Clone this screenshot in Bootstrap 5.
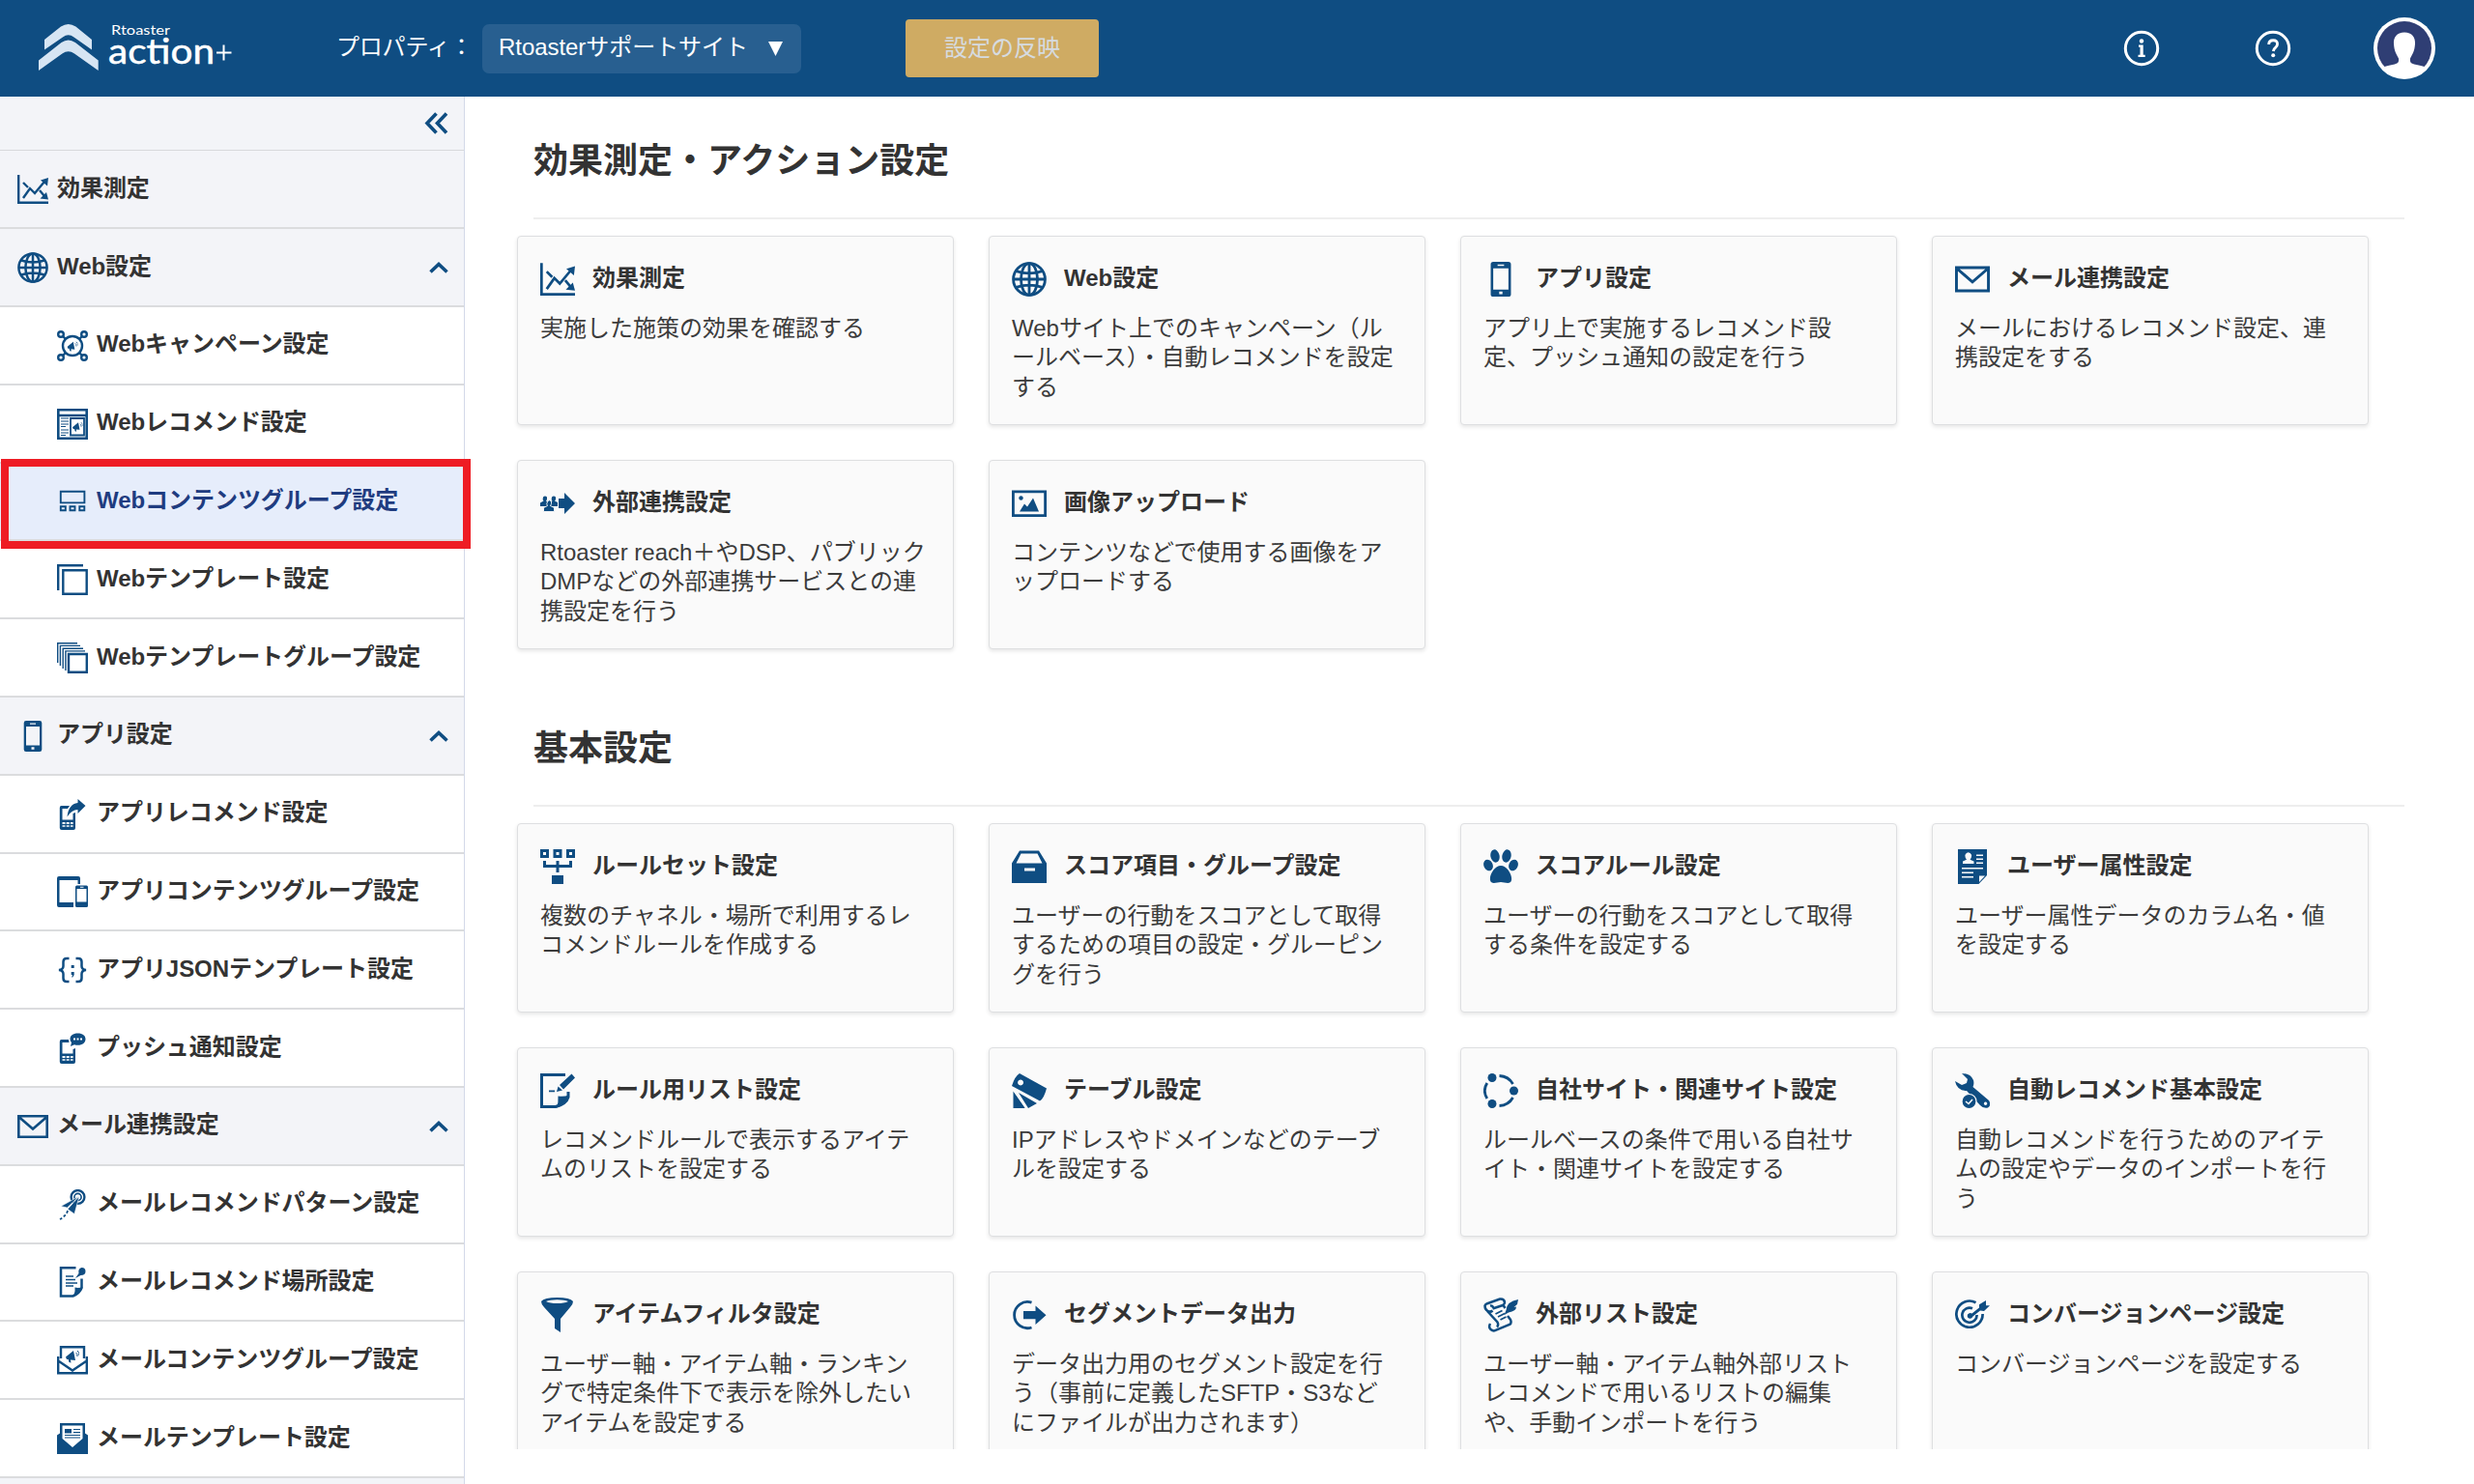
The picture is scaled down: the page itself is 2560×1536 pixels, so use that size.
<!DOCTYPE html>
<html lang="ja">
<head>
<meta charset="utf-8">
<meta name="viewport" content="width=device-width, initial-scale=1">
<title>Rtoaster action+</title>
<link rel="stylesheet" href="https://cdn.jsdelivr.net/npm/bootstrap@5.3.0/dist/css/bootstrap.min.css">
<style>
:root{--navy:#0f4d82;--pane:#f3f4f8;--ink:#333}
html,body{height:100%;overflow:hidden}
body{font-family:"Liberation Sans","Noto Sans CJK JP",sans-serif;font-size:24px;line-height:1.25;color:var(--ink);background:#fff}
svg{display:block;flex:none;fill:currentColor}
.topbar{height:100px;background:var(--navy);color:#fff;padding-left:40px;padding-right:40px}
.logo{width:202px;height:76px;margin-right:106px}
.prop-label{width:151px;letter-spacing:-.2px;margin-top:-2px}
.prop-select{width:330px;height:51px;border-radius:7px;background:#285f90;color:#fff;padding:0 18px 0 16px;font-size:24px}
.prop-select span{margin-top:-2px;letter-spacing:-.05px}
.apply-btn{width:200px;height:60px;margin-left:108px;border-radius:4px;background:#cfab63;color:#d6dbe0;border:0;font-size:24px;padding:0}
.round-links{gap:98px}
.avatar{margin-left:-13px}
.side{width:481px;border-right:1px solid #d3d9e8;background:#fff}
.side-fold{height:56.400px;background:var(--pane);border-bottom:1px solid #d8d9dc;padding-right:16px;color:var(--navy)}
.side-item{height:80.800px;border-bottom:2px solid #dbdcde;padding:0 16px 0 59px;font-weight:700;position:relative;gap:9px;white-space:nowrap}
.side-item.group{background:var(--pane);padding-left:18px}
.side-item svg{color:var(--navy);width:32px;height:32px;margin-top:1px}
.side-item svg.caret{width:20px;height:12px;margin-top:1px}
.side-item span{margin-top:-2px;letter-spacing:-.05px}
.side-item.current{background:#e6edfb;color:#1f3c80}
.hilite{position:absolute;left:1px;top:-5px;width:486px;height:93px;border:8px solid #ee1c24;z-index:5}
.pane{height:1400px;overflow:hidden;padding:0 72px 0 54px}
.sec-title{font-size:36px;font-weight:700;line-height:44px;padding:45px 0 36px;margin:0 0 0 17px;border-bottom:2px solid #eee}
.tiles + .sec-title{margin-top:36px}
.tiles{display:grid;grid-template-columns:repeat(4,451.500px);grid-auto-rows:196px;gap:36px 36.500px;padding-top:17px}
.tile{border:1px solid #dedfe1;border-radius:4px;background:#fafafa;box-shadow:0 2px 4px rgba(0,0,0,.1);padding:26px 0 0 23px;white-space:nowrap}
.tile-head{height:36px;gap:18px;font-weight:700}
.tile-head svg{width:36px;height:36px;color:var(--navy)}
.tile-head span{margin-top:-3px}
.tile p{margin:17.500px 0 0;line-height:30.600px;color:#3c3c3c}
</style>
</head>
<body class="d-flex flex-column">

<svg width="0" height="0" class="position-absolute">
<defs>
<symbol id="chart" viewBox="0 0 32 32"><path d="M0 1h2.400v27.600H32V31H0z"/><path d="M6 25l7-10 5 5 10-12M6 9l5 5M23 17l5 6" fill="none" stroke="currentColor" stroke-width="2.400"/><path d="M32 4l-1 8.500-7-6zM32 26.500l-8.500-1 6.500-6.500z"/></symbol>
<symbol id="globe" viewBox="0 0 32 32"><g fill="none" stroke="currentColor" stroke-width="2.500"><circle cx="16" cy="16" r="14.600"/><ellipse cx="16" cy="16" rx="7.600" ry="14.600"/><path d="M16 1v30M1 16h30M4 8.500q12 4 24 0M4 23.500q12-4 24 0"/></g></symbol>
<symbol id="phone" viewBox="0 0 32 32"><path fill-rule="evenodd" d="M9 0h14q2.300 0 2.300 2.300v27.400q0 2.300-2.300 2.300H9q-2.300 0-2.300-2.300V2.300Q6.700 0 9 0zM9 6v19.500h14V6zM13 2.500v1.300h6V2.500zM14.500 27.300v2.400h3v-2.400z"/></symbol>
<symbol id="mail" viewBox="0 0 32 32"><path d="M1.300 5.300h29.400v21.400H1.300zM1.500 6L16 18.500 30.500 6" fill="none" stroke="currentColor" stroke-width="2.600"/></symbol>
<symbol id="horn" viewBox="0 0 14 14"><path d="M0 7.500L8 1l2 10-5-.500.500 3-2-.500-.800-3L1 10z"/><path d="M10.500 3q2 1 1.500 4M12 1q2.500 2 2 5" fill="none" stroke="currentColor"/></symbol>
<symbol id="campaign" viewBox="0 0 32 32"><g fill="none" stroke="currentColor" stroke-width="2.400"><circle cx="16" cy="16" r="10"/><circle cx="4" cy="4" r="2.800"/><circle cx="28" cy="4" r="2.800"/><circle cx="4" cy="28" r="2.800"/><circle cx="28" cy="28" r="2.800"/><path d="M6 6l3 3M26 6l-3 3M6 26l3-3M26 26l-3-3"/></g><use href="#horn" x="10.500" y="11" width="11" height="11"/></symbol>
<symbol id="webreco" viewBox="0 0 32 32"><path d="M1.300 1.300h29.400v29.400H1.300zM1 7h30" fill="none" stroke="currentColor" stroke-width="2.600"/><path d="M14 10h14v17.500H14z" fill="none" stroke="currentColor" stroke-width="1.800"/><path d="M4 10h8M4 13h8M4 16h8M4 18.500h5M4 22h8M4 25h8M4 27.500h5" stroke="currentColor" stroke-width="1.200"/><use href="#horn" x="16" y="13.500" width="10.500" height="10.500"/></symbol>
<symbol id="group" viewBox="0 0 32 32"><path d="M3.800 5.700h24.600v11.700H3.800zM3.800 21.300h5v4h-5zM13.500 21.300h5v4h-5zM23.300 21.300h5v4h-5z" fill="none" stroke="currentColor" stroke-width="1.900"/></symbol>
<symbol id="copy" viewBox="0 0 32 32"><path d="M6.300 6.300h24.400v24.400H6.300zM1.200 27V1.200H27" fill="none" stroke="currentColor" stroke-width="2.400"/></symbol>
<symbol id="copies" viewBox="0 0 32 32"><path d="M12 12h18.800v18.800H12z" fill="none" stroke="currentColor" stroke-width="2.400"/><path d="M.700 21V.700H21M3.400 24V3.400H24M6.200 27V6.200H27M8.900 29V8.900H29" fill="none" stroke="currentColor" stroke-width="1.400"/></symbol>
<symbol id="mobile-share" viewBox="0 0 32 32"><path fill-rule="evenodd" d="M4.500 7H13l-2 3H5.500v11.500h11V15l2.500-1v16q0 2-2 2H4.800q-2 0-2-2V9q0-2 1.700-2zM5.500 24v2h3v-2zM9.700 24v2h3v-2zM13.900 24v2h2.700v-2zM5.500 27.200v1.500h3v-1.500zM9.700 27.200v1.500h3v-1.500zM13.900 27.200v1.500h2.700v-1.500z"/><path d="M29.500 7L21.500 0v4Q12 5 10.500 18.500 15 11 21.500 11v4z"/></symbol>
<symbol id="tablet" viewBox="0 0 32 32"><path d="M2 0h20q2 0 2 2v6h-2.500V4H2.500v23H17v5H2q-2 0-2-2V2Q0 0 2 0z"/><path fill-rule="evenodd" d="M20.500 9.500h10q1.500 0 1.500 1.500v19.500q0 1.500-1.500 1.500h-10q-1.500 0-1.500-1.500V11q0-1.500 1.500-1.500zM20.500 13v13.500h10V13zM24 10.700v1h3.500v-1z"/></symbol>
<symbol id="braces" viewBox="0 0 32 32"><path d="M12.500 4H10q-3.500 0-3.500 3.500V12q0 3.500-4.500 4 4.500.500 4.500 4v4.500Q6.500 28 10 28h2.500M19.500 4H22q3.500 0 3.500 3.500V12q0 3.500 4.500 4-4.500.500-4.500 4v4.500Q25.500 28 22 28h-2.500" fill="none" stroke="currentColor" stroke-width="2.500"/><path d="M14.700 11h3v3h-3zM14.700 18h3v3l-1.500 2.500h-1L16 21h-1.300z"/></symbol>
<symbol id="mobile-chat" viewBox="0 0 32 32"><path fill-rule="evenodd" d="M4.500 7H12l.500 3h-7v11.500h11V17l2.500-1v14q0 2-2 2H4.800q-2 0-2-2V9q0-2 1.700-2zM5.500 24v2h3v-2zM9.700 24v2h3v-2zM13.900 24v2h2.700v-2zM5.500 27.200v1.500h3v-1.500zM9.700 27.200v1.500h3v-1.500zM13.900 27.200v1.500h2.700v-1.500z"/><path fill-rule="evenodd" d="M21.500.500c5 0 8 2.500 8 6s-3 6.300-8 6.300q-2 0-3.500-.500l-4 1.700 1-4Q13.500 8.500 13.500 6.500c0-3.500 3-6 8-6zM17 5.500v2h2v-2zM20.500 5.500v2h2v-2zM24 5.500v2h2v-2z"/></symbol>
<symbol id="plane" viewBox="0 0 32 32"><g fill="none" stroke="currentColor"><circle cx="21.500" cy="8" r="6.900" stroke-width="2.400"/><circle cx="21.500" cy="8" r="3.600" stroke-width="1.600"/><path d="M11 22q-1 5-8 9" stroke-width="1.800" stroke-dasharray="3 2"/></g><path d="M23 7L4 17.500l6.500 1.500zM23 7L11 20.500l7 5z" stroke="#fff" stroke-width=".600"/></symbol>
<symbol id="notepin" viewBox="0 0 32 32"><path d="M19.500 1.300H4V30.500h12.500q7-3 9-8.500V12.500" fill="none" stroke="currentColor" stroke-width="2.500"/><path d="M16 31q3-3 2.500-9.500 4 1 8-.500-2 6-10.500 10zM19 12l3.500-5q-1-5 3-6 4 0 4 4t-5 4z"/><path d="M9 10h8M9 13.500h10M9 17h12M9 20h8" stroke="currentColor" stroke-width="1.500"/></symbol>
<symbol id="mailhorn" viewBox="0 0 32 32"><path d="M4 14V2.300h24V14" fill="none" stroke="currentColor" stroke-width="2.400"/><path d="M1.200 12v17.300h29.600V12M2 17l14 9.500L30 17" fill="none" stroke="currentColor" stroke-width="2.400"/><use href="#horn" x="9" y="5" width="14" height="14"/></symbol>
<symbol id="mailnews" viewBox="0 0 32 32"><path fill-rule="evenodd" d="M3 0h26v10.500l3 2V32H0V12.500l3-2zM5.500 2.500V16L16 25l10.500-9V2.500z"/><path d="M8 6h7v4.500H8zM17 6h7v1h-7zM17 9h7v1.200h-7zM8 12h16v1H8zM8 14.500h16v1H8z"/></symbol>
<symbol id="people" viewBox="0 0 36 36"><path d="M19 13h6V7l11 11-11 11v-6h-6z"/><path d="M3 11.500q2-2 4 0 .500 3-1 4l2 1.500v4H0v-3.500l3.500-2q-1.500-1-.500-4zM12 11.500q2-2 4 0 .500 3-1 4l3 1.500v4h-7v-4.500l1.500-1q-1.500-1-.500-4z"/><path d="M7.500 16q2-2.500 4 0 .500 3-1 4.500l4 2v4h-11v-4l4-2q-1.500-1.500 0-4.500z" stroke="#fafafa" stroke-width=".900"/></symbol>
<symbol id="image" viewBox="0 0 36 36"><path d="M1.400 5.900h33.200v24.700H1.400z" fill="none" stroke="currentColor" stroke-width="2.800"/><path d="M8 26.500l5-8 3 3 6-9 6 14z"/><circle cx="9.500" cy="12.500" r="2.200"/></symbol>
<symbol id="ruleset" viewBox="0 0 36 36"><path d="M1.500 1.500h6v6h-6zM15 1.500h6v6h-6zM28.500 1.500h6v6h-6zM4.500 12v5.500h27V12M18 12v12" fill="none" stroke="currentColor" stroke-width="3"/><path d="M12 27h12v9H12z"/></symbol>
<symbol id="drawer" viewBox="0 0 36 36"><path fill-rule="evenodd" d="M8 1.500h20l8 13V35H0V14.500zM9.500 4.500l-5 10h27l-5-10zM13 19.500v3h11v-3z"/></symbol>
<symbol id="paw" viewBox="0 0 36 36"><path d="M18 17c6 0 12 9 11 15-1 5-7 2-11 2s-10 3-11-2c-1-6 5-15 11-15z"/><ellipse cx="12" cy="7" rx="4.600" ry="6.700" transform="rotate(-12 12 7)"/><ellipse cx="24" cy="7" rx="4.600" ry="6.700" transform="rotate(12 24 7)"/><ellipse cx="5" cy="16.500" rx="4.600" ry="6" transform="rotate(-25 5 16.500)"/><ellipse cx="31" cy="16.500" rx="4.600" ry="6" transform="rotate(25 31 16.500)"/></symbol>
<symbol id="profile" viewBox="0 0 36 36"><path d="M3 0h30v27l-8.500 9H3z"/><g fill="#fafafa"><path d="M8 15v-2.500l4-1.800q-2-2-1.500-5 1-2.500 3.200-2.500T17 5.700q.500 3-1.500 5l4 1.800V15zM22 5.500h7V7h-7zM22 9.500h7V11h-7zM22 13.500h7V15h-7zM7 19h22v1.500H7zM7 23.500h12V25H7zM7 28h12v1.500H7zM25 34v-6.500h6z"/></g></symbol>
<symbol id="editnote" viewBox="0 0 36 36"><path d="M26 1.500H1.500v33H16q11-3 13-10V19" fill="none" stroke="currentColor" stroke-width="3"/><path d="M17 35.500q2-5 1.500-12 6 1 11-1-2 10-12.500 13zM20 12L32.500.500l3.500 4L24 16.500zM18.500 13.500l4.500 4-6 1.500zM9 17.500h6v1.800H9z"/></symbol>
<symbol id="swatch" viewBox="0 0 36 36"><path fill-rule="evenodd" d="M8 0l28 15.500q-3 11-7 13L0 13Q3 3 8 0zM9 6.500a3 3 0 1 0 .100 0z"/><path d="M7 20l19 11-9 5zM1.500 18.500L14 36H1.500z"/><path d="M2 17l13 19" stroke="#fafafa" stroke-width="2"/></symbol>
<symbol id="orbit" viewBox="0 0 36 36"><circle cx="9" cy="4.500" r="4.500"/><circle cx="31.500" cy="18" r="4.500"/><circle cx="9" cy="31.500" r="4.500"/><path d="M3.800 10q-5 8 0 16M16.500 2.500Q26 3 30.500 11M16.500 33.500Q26 33 30.500 25" fill="none" stroke="currentColor" stroke-width="2.800"/></symbol>
<symbol id="wrench" viewBox="0 0 36 36"><path fill-rule="evenodd" d="M7 0q9 0 12 7 1 4-.500 7L35 28q3 5-1 7.500-5 1-8-2.500L12 18Q2 18 0 8l7 4 5-2 1-4zM31.500 29.500a1.700 1.700 0 1 0 .100 0z"/><circle cx="14.500" cy="29" r="7.500" stroke="#fafafa" stroke-width="1.200"/><path d="M11 29l3 2.500 4-4.500" fill="none" stroke="#fafafa" stroke-width="1.600"/></symbol>
<symbol id="funnel" viewBox="0 0 36 36"><path fill-rule="evenodd" d="M1 4Q4 0 17.500 0T34 4q0 3-3 6L21 22v14l-6-4V22L4 10Q1 7 1 4zM6 4q4 2 11.500 2T29 4q-4-1.800-11.500-1.800T6 4z"/></symbol>
<symbol id="export" viewBox="0 0 36 36"><path d="M20.500 5.200A13.600 13.600 0 1 0 20.500 31" fill="none" stroke="currentColor" stroke-width="2.800"/><path d="M12 14h12.500V8.500L35.500 18.200 24.500 28v-5.700H12z"/></symbol>
<symbol id="scroll" viewBox="0 0 36 36"><g fill="none" stroke="currentColor" stroke-width="2.500"><path d="M9.500 13.500q-2 2-5 .500T1.500 8.500Q2 7 4 6.200L17 1.500q4.500-.500 5 3.500 0 2-2 3L9.500 11.500M7 8.500q3-.500 3 2.500"/><path d="M4 14l10.500 11.500q1.500 3-.500 5M7 27q-2 4 .500 6t4.500 1.200L27 28q2.500-1.500 1-5L25 19M20.500 8l2 3"/></g><path d="M12.500 17l7-3.500M15 20l7-3.500M17.500 23l6-3" stroke="currentColor" stroke-width="1.800"/><path d="M36 2Q24 4 23.500 13l-2 5 4.500-2.500q8-1.500 8-6l-2.500.500 3.500-3z"/></symbol>
<symbol id="target" viewBox="0 0 36 36"><path d="M21.500 5.200A13.600 13.600 0 1 0 28.600 17M18 11.200A7.600 7.600 0 1 0 22.600 18" fill="none" stroke="currentColor" stroke-width="2.700"/><path d="M13 17.500q2-2.500 4.500-1L25 10.500V7.200l7-4.200V8.300h4L30 14l-4-.500-7.500 6q-1.500 3-4 2t-1.500-4z"/></symbol>
<symbol id="up" viewBox="0 0 20 12"><path d="M1.500 10.500L10 2.500l8.500 8" fill="none" stroke="currentColor" stroke-width="3.600"/></symbol>
</defs>
</svg>

<header class="topbar d-flex align-items-center flex-shrink-0">
  <svg class="logo" viewBox="40 12 202 76">
    <path fill="#d7e5f3" d="M46 51.500V41l17-13.500q7.700-5 15.400 0L95 41v10.500L76.500 38.500q-5.800-4.500-11.600 0zM40 73V62.500L63.500 44q7.200-5 14.400 0L101.700 62.500V73L77 55.500q-6.300-4.500-12.600 0z"/>
    <g fill="#fff" font-family="Lato, sans-serif"><text x="115" y="36.300" font-size="13.800" textLength="61" lengthAdjust="spacingAndGlyphs">Rtoaster</text><text x="112" y="65.500" font-size="36" textLength="110" lengthAdjust="spacingAndGlyphs" stroke="#fff" stroke-width=".500">action</text></g>
    <path d="M231.500 46.500v16M224 54.500h15.500" stroke="#fff" stroke-width="2"/>
  </svg>
  <div class="prop-label text-nowrap">プロパティ：</div>
  <button class="prop-select btn d-flex align-items-center justify-content-between">
    <span>Rtoasterサポートサイト</span>
    <svg width="15" height="15" viewBox="0 0 15 15"><path d="M0 0h15L7.500 15z"/></svg>
  </button>
  <button class="apply-btn btn">設定の反映</button>
  <div class="round-links d-flex align-items-center ms-auto">
    <svg width="38" height="38" viewBox="0 0 38 38"><circle cx="19" cy="19" r="16.700" fill="none" stroke="#fff" stroke-width="3"/><circle cx="19" cy="11.500" r="2.200"/><path d="M16 15.500h4.700v10.300h2V28H15.500v-2.200h2v-8H16z"/></svg>
    <svg width="38" height="38" viewBox="0 0 38 38"><circle cx="19" cy="19" r="16.700" fill="none" stroke="#fff" stroke-width="3"/><path d="M14.700 15q0-4.200 4.500-4.200t4.300 4q0 2-2 3.500T19.300 22" fill="none" stroke="#fff" stroke-width="2.900"/><circle cx="19.200" cy="26.300" r="2"/></svg>
    <svg class="avatar" width="64" height="64" viewBox="0 0 64 64"><circle cx="32" cy="32" r="32"/><circle cx="32" cy="32" r="28" fill="#2f3e74"/><path d="M32 15.500c8 0 11.500 5 11 12-.500 8-3 11-5 15-.500 4 1 5 4 6 5 1 9.500 1.500 12 3.500L46 58q-14 6-28 0l-8-6c2.500-2 7-2.500 12-3.500 3-1 4.500-2 4-6-2-4-4.500-7-5-15-.500-7 3-12 11-12z"/></svg>
  </div>
</header>

<div class="d-flex flex-grow-1">
  <nav class="side flex-shrink-0">
    <div class="side-fold d-flex align-items-center justify-content-end"><svg width="25" height="23" viewBox="0 0 25 23"><path d="M12.500 1.500L3 11.500l9.500 10M23 1.500l-9.500 10 9.500 10" fill="none" stroke="currentColor" stroke-width="3.600"/></svg></div>
    <div class="side-item group d-flex align-items-center"><svg><use href="#chart"/></svg><span>効果測定</span></div>
    <div class="side-item group d-flex align-items-center"><svg><use href="#globe"/></svg><span>Web設定</span><svg class="caret ms-auto"><use href="#up"/></svg></div>
    <div class="side-item d-flex align-items-center"><svg><use href="#campaign"/></svg><span>Webキャンペーン設定</span></div>
    <div class="side-item d-flex align-items-center"><svg><use href="#webreco"/></svg><span>Webレコメンド設定</span></div>
    <div class="side-item current d-flex align-items-center"><svg><use href="#group"/></svg><span>Webコンテンツグループ設定</span><div class="hilite"></div></div>
    <div class="side-item d-flex align-items-center"><svg><use href="#copy"/></svg><span>Webテンプレート設定</span></div>
    <div class="side-item d-flex align-items-center"><svg><use href="#copies"/></svg><span>Webテンプレートグループ設定</span></div>
    <div class="side-item group d-flex align-items-center"><svg><use href="#phone"/></svg><span>アプリ設定</span><svg class="caret ms-auto"><use href="#up"/></svg></div>
    <div class="side-item d-flex align-items-center"><svg><use href="#mobile-share"/></svg><span>アプリレコメンド設定</span></div>
    <div class="side-item d-flex align-items-center"><svg><use href="#tablet"/></svg><span>アプリコンテンツグループ設定</span></div>
    <div class="side-item d-flex align-items-center"><svg><use href="#braces"/></svg><span>アプリJSONテンプレート設定</span></div>
    <div class="side-item d-flex align-items-center"><svg><use href="#mobile-chat"/></svg><span>プッシュ通知設定</span></div>
    <div class="side-item group d-flex align-items-center"><svg><use href="#mail"/></svg><span>メール連携設定</span><svg class="caret ms-auto"><use href="#up"/></svg></div>
    <div class="side-item d-flex align-items-center"><svg><use href="#plane"/></svg><span>メールレコメンドパターン設定</span></div>
    <div class="side-item d-flex align-items-center"><svg><use href="#notepin"/></svg><span>メールレコメンド場所設定</span></div>
    <div class="side-item d-flex align-items-center"><svg><use href="#mailhorn"/></svg><span>メールコンテンツグループ設定</span></div>
    <div class="side-item d-flex align-items-center"><svg><use href="#mailnews"/></svg><span>メールテンプレート設定</span></div>
    <div class="side-item group"></div>
  </nav>

  <main class="pane flex-grow-1">
    <h2 class="sec-title">効果測定・アクション設定</h2>
    <div class="tiles">
      <div class="tile"><div class="tile-head d-flex align-items-center"><svg><use href="#chart"/></svg><span>効果測定</span></div><p>実施した施策の効果を確認する</p></div>
      <div class="tile"><div class="tile-head d-flex align-items-center"><svg><use href="#globe"/></svg><span>Web設定</span></div><p>Webサイト上でのキャンペーン（ル<br>ールベース）・自動レコメンドを設定<br>する</p></div>
      <div class="tile"><div class="tile-head d-flex align-items-center"><svg><use href="#phone"/></svg><span>アプリ設定</span></div><p>アプリ上で実施するレコメンド設<br>定、プッシュ通知の設定を行う</p></div>
      <div class="tile"><div class="tile-head d-flex align-items-center"><svg><use href="#mail"/></svg><span>メール連携設定</span></div><p>メールにおけるレコメンド設定、連<br>携設定をする</p></div>
      <div class="tile"><div class="tile-head d-flex align-items-center"><svg><use href="#people"/></svg><span>外部連携設定</span></div><p>Rtoaster reach＋やDSP、パブリック<br>DMPなどの外部連携サービスとの連<br>携設定を行う</p></div>
      <div class="tile"><div class="tile-head d-flex align-items-center"><svg><use href="#image"/></svg><span>画像アップロード</span></div><p>コンテンツなどで使用する画像をア<br>ップロードする</p></div>
    </div>
    <h2 class="sec-title">基本設定</h2>
    <div class="tiles">
      <div class="tile"><div class="tile-head d-flex align-items-center"><svg><use href="#ruleset"/></svg><span>ルールセット設定</span></div><p>複数のチャネル・場所で利用するレ<br>コメンドルールを作成する</p></div>
      <div class="tile"><div class="tile-head d-flex align-items-center"><svg><use href="#drawer"/></svg><span>スコア項目・グループ設定</span></div><p>ユーザーの行動をスコアとして取得<br>するための項目の設定・グルーピン<br>グを行う</p></div>
      <div class="tile"><div class="tile-head d-flex align-items-center"><svg><use href="#paw"/></svg><span>スコアルール設定</span></div><p>ユーザーの行動をスコアとして取得<br>する条件を設定する</p></div>
      <div class="tile"><div class="tile-head d-flex align-items-center"><svg><use href="#profile"/></svg><span>ユーザー属性設定</span></div><p>ユーザー属性データのカラム名・値<br>を設定する</p></div>
      <div class="tile"><div class="tile-head d-flex align-items-center"><svg><use href="#editnote"/></svg><span>ルール用リスト設定</span></div><p>レコメンドルールで表示するアイテ<br>ムのリストを設定する</p></div>
      <div class="tile"><div class="tile-head d-flex align-items-center"><svg><use href="#swatch"/></svg><span>テーブル設定</span></div><p>IPアドレスやドメインなどのテーブ<br>ルを設定する</p></div>
      <div class="tile"><div class="tile-head d-flex align-items-center"><svg><use href="#orbit"/></svg><span>自社サイト・関連サイト設定</span></div><p>ルールベースの条件で用いる自社サ<br>イト・関連サイトを設定する</p></div>
      <div class="tile"><div class="tile-head d-flex align-items-center"><svg><use href="#wrench"/></svg><span>自動レコメンド基本設定</span></div><p>自動レコメンドを行うためのアイテ<br>ムの設定やデータのインポートを行<br>う</p></div>
      <div class="tile"><div class="tile-head d-flex align-items-center"><svg><use href="#funnel"/></svg><span>アイテムフィルタ設定</span></div><p>ユーザー軸・アイテム軸・ランキン<br>グで特定条件下で表示を除外したい<br>アイテムを設定する</p></div>
      <div class="tile"><div class="tile-head d-flex align-items-center"><svg><use href="#export"/></svg><span>セグメントデータ出力</span></div><p>データ出力用のセグメント設定を行<br>う（事前に定義したSFTP・S3など<br>にファイルが出力されます）</p></div>
      <div class="tile"><div class="tile-head d-flex align-items-center"><svg><use href="#scroll"/></svg><span>外部リスト設定</span></div><p>ユーザー軸・アイテム軸外部リスト<br>レコメンドで用いるリストの編集<br>や、手動インポートを行う</p></div>
      <div class="tile"><div class="tile-head d-flex align-items-center"><svg><use href="#target"/></svg><span>コンバージョンページ設定</span></div><p>コンバージョンページを設定する</p></div>
    </div>
  </main>
</div>
<script src="https://cdn.jsdelivr.net/npm/bootstrap@5.3.0/dist/js/bootstrap.bundle.min.js"></script>
</body>
</html>
